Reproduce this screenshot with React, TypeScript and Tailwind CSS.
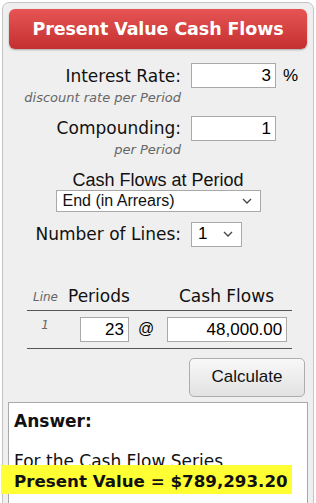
import React from "react";

const verdana = { fontFamily: '"DejaVu Sans", Verdana, sans-serif' } as const;
const arial = { fontFamily: '"Liberation Sans", Arial, sans-serif' } as const;

export default function App() {
  return (
    <div className="w-[316px] h-[503px] overflow-hidden bg-white" style={verdana}>
      <div className="ml-[2px] mt-[2px] w-[312px] h-[520px] rounded-t-[7px] border border-[#c4c4c4] bg-[#efefef] pt-[6px]">
        <div className="mx-[6px] h-[40px] rounded-[6px] bg-gradient-to-b from-[#e65454] to-[#c42f2f] shadow-[0_1px_2px_rgba(0,0,0,0.3)] flex items-center justify-center">
          <span className="text-white font-bold text-[17.5px] tracking-[-0.1px]">Present Value Cash Flows</span>
        </div>

        <div className="mt-[14px] flex items-center">
          <div className="w-[178px] text-right text-[17px] leading-[22px] text-[#111]">Interest Rate:</div>
          <div className="ml-[10px] w-[85px] h-[25px] border border-[#a9a9a9] bg-white text-right pr-[4px] text-[17px] leading-[23px]" style={arial}>3</div>
          <div className="ml-[7px] text-[17px]" style={arial}>%</div>
        </div>
        <div className="w-[178px] text-right text-[13px] italic text-[#666] leading-[16px] mt-[1px]">discount rate per Period</div>

        <div className="mt-[10px] flex items-center">
          <div className="w-[178px] text-right text-[17px] leading-[22px] text-[#111]">Compounding:</div>
          <div className="ml-[10px] w-[85px] h-[25px] border border-[#a9a9a9] bg-white text-right pr-[4px] text-[17px] leading-[23px]" style={arial}>1</div>
        </div>
        <div className="w-[178px] text-right text-[13px] italic text-[#666] leading-[16px] mt-[1px]">per Period</div>

        <div className="mt-[12px] text-center text-[18px] text-[#111] leading-[20px]" style={arial}>Cash Flows at Period</div>
        <div className="flex justify-center">
          <div className="w-[205px] h-[22px] border border-[#a9a9a9] bg-white flex items-center justify-between pl-[6px] pr-[8px] text-[16px] text-[#111]" style={arial}>
            <span>End (in Arrears)</span>
            <svg width="10" height="6" viewBox="0 0 10 6"><path d="M1 1l4 4 4-4" stroke="#444" strokeWidth="1.3" fill="none" /></svg>
          </div>
        </div>

        <div className="mt-[10px] flex items-center">
          <div className="w-[178px] text-right text-[17px] leading-[22px] text-[#111]">Number of Lines:</div>
          <div className="ml-[10px] w-[51px] h-[25px] border border-[#a9a9a9] bg-white flex items-center justify-between pl-[6px] pr-[8px] text-[17px]" style={arial}>
            <span>1</span>
            <svg width="10" height="6" viewBox="0 0 10 6"><path d="M1 1l4 4 4-4" stroke="#444" strokeWidth="1.3" fill="none" /></svg>
          </div>
        </div>

        <div className="mt-[40px] ml-[24px] w-[265px]">
          <div className="flex items-end h-[24px] pb-[3px] border-b border-[#555]">
            <div className="w-[31px] text-right text-[12px] italic text-[#666] leading-[20px]">Line</div>
            <div className="ml-[10px] w-[67px] text-[17px] leading-[22px] text-[#111]">Periods</div>
            <div className="flex-1 text-center text-[17px] leading-[22px] text-[#111] pl-[26px]">Cash Flows</div>
          </div>
          <div className="flex items-center h-[38px] border-b border-[#555]">
            <div className="w-[22px] text-right text-[12px] italic text-[#666] mb-[8px]">1</div>
            <div className="ml-[31px] w-[49px] h-[25px] border border-[#a9a9a9] bg-white text-right pr-[4px] text-[17px] leading-[23px]" style={arial}>23</div>
            <div className="ml-[9px] text-[16px]" style={arial}>@</div>
            <div className="ml-[13px] w-[120px] h-[25px] border border-[#a9a9a9] bg-white text-right pr-[4px] text-[17px] leading-[23px]" style={arial}>48,000.00</div>
          </div>
        </div>

        <div className="flex justify-end pr-[8px] mt-[9px]">
          <div className="w-[116px] h-[39px] rounded-[5px] border border-[#adadad] bg-gradient-to-b from-[#f8f8f8] to-[#e2e2e2] flex items-center justify-center text-[17px] text-[#111]" style={arial}>Calculate</div>
        </div>

        <div className="relative mt-[5px] mx-[5px] h-[120px] border border-[#a9a9a9] bg-white px-[5px] pt-[8px]">
          <div className="font-bold text-[17px] text-[#111] leading-[20px]">Answer:</div>
          <div className="mt-[20px] text-[17px] text-[#111] leading-[20px]">For the Cash Flow Series</div>
          <div className="relative font-bold text-[16.7px] text-[#111] leading-[20px]">
            <span className="absolute left-[-13px] top-[-6px] w-[291px] h-[29px] bg-[#ffff33]" />
            <span className="relative">Present Value = $789,293.20</span>
          </div>
        </div>
      </div>
    </div>
  );
}
